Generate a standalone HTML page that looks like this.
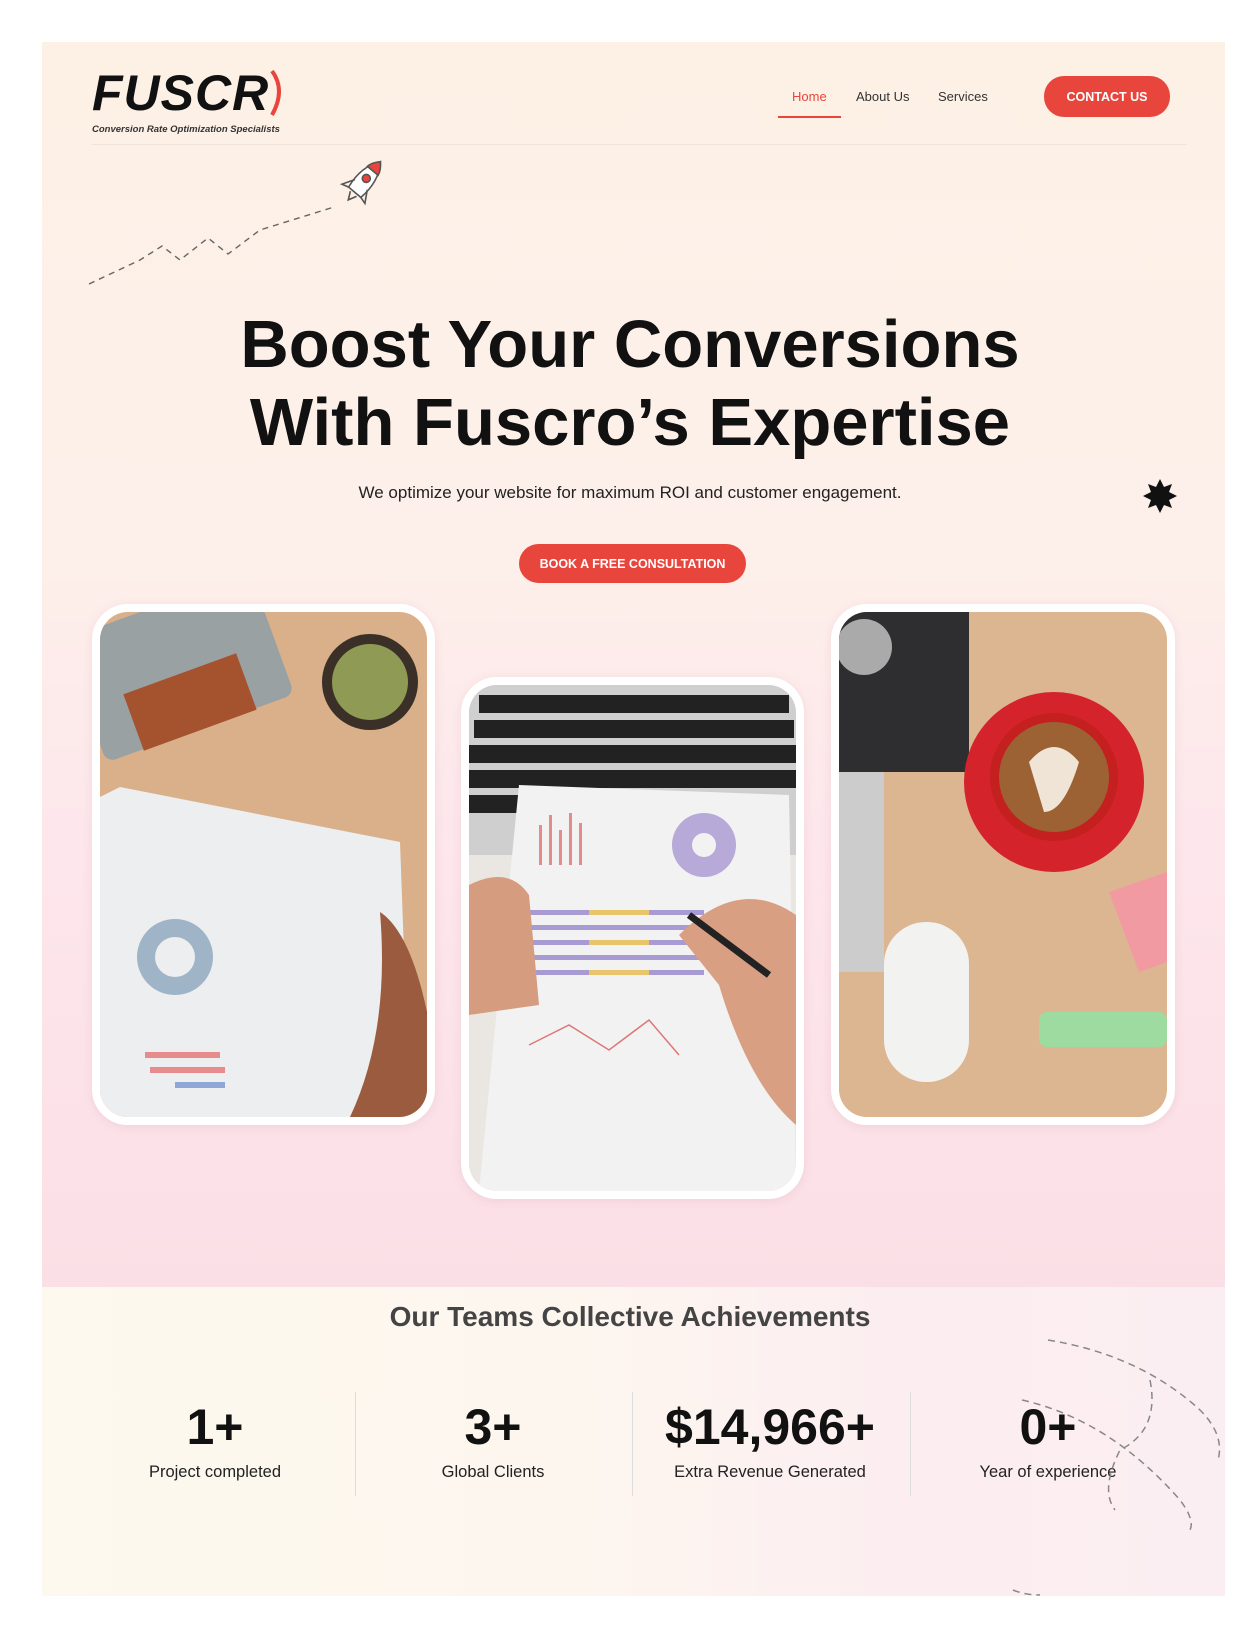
<!DOCTYPE html>
<html><head><meta charset="utf-8"><style>
*{margin:0;padding:0;box-sizing:border-box}
body{width:1260px;height:1631px;background:#fff;font-family:"Liberation Sans",sans-serif;position:relative;overflow:hidden}
.abs{position:absolute}
#hero{left:42px;top:42px;width:1183px;height:1245px;background:linear-gradient(180deg,#fdf1e6 0%,#fdf0ea 40%,#fde6ec 65%,#fbdfe6 100%)}
#ach{left:42px;top:1287px;width:1183px;height:309px;background:linear-gradient(90deg,#fdf9ee 0%,#fdf6ef 45%,#fcedf0 75%,#fbeef2 100%)}
.nav{font-size:13px;color:#333;top:89px}
.btn{background:#e8463c;color:#fff;font-weight:bold;font-size:12.5px;border-radius:20px;display:flex;align-items:center;justify-content:center}
h1{position:absolute;left:0;width:1260px;text-align:center;font-size:67px;font-weight:bold;color:#111;line-height:78px;top:306px}
.card{border:8px solid #fff;border-radius:36px;overflow:hidden;box-shadow:0 2px 10px rgba(200,150,160,.2)}
.num{font-size:50px;font-weight:bold;color:#111;text-align:center;width:270px;top:1398px}
.lbl{font-size:16.5px;color:#222;text-align:center;width:270px;top:1463px}
.div{width:1px;height:104px;background:#ddd;top:1392px}
</style></head><body>
<div id="hero" class="abs"></div>
<div id="ach" class="abs"></div>
<div class="abs" style="left:92px;top:64px;font-size:50px;font-weight:bold;font-style:italic;color:#111;letter-spacing:1px">FUSCR</div>
<svg class="abs" style="left:264px;top:68px" width="24" height="50"><path d="M8 3 Q22 22 8 47" stroke="#e8463c" stroke-width="4" fill="none"/><path d="M12 8 Q18 25 12 40" stroke="#e8463c" stroke-width="1.5" fill="none"/></svg>
<div class="abs" style="left:92px;top:124px;font-size:9.5px;font-style:italic;font-weight:bold;color:#333">Conversion Rate Optimization Specialists</div>
<div class="abs nav" style="left:792px;color:#e8463c">Home</div>
<div class="abs" style="left:778px;top:116px;width:63px;height:2px;background:#e8463c"></div>
<div class="abs nav" style="left:856px">About Us</div>
<div class="abs nav" style="left:938px">Services</div>
<div class="abs btn" style="left:1044px;top:76px;width:126px;height:41px">CONTACT US</div>
<div class="abs" style="left:92px;top:144px;width:1095px;height:1px;background:#efe3da"></div>
<svg class="abs" style="left:80px;top:150px" width="330" height="140">
<path d="M9 134 L60 110 L82 96 L100 110 L128 88 L148 104 L180 80 L254 57" stroke="#666" stroke-width="1.4" stroke-dasharray="6 5" fill="none"/>
<g transform="translate(285,30) rotate(40)" stroke="#555" stroke-width="1.6" fill="none">
<path d="M0 -24 Q12 -8 8 16 L-8 16 Q-12 -8 0 -24Z" fill="#fff"/>
<path d="M0 -24 Q6 -18 7 -12 L-7 -12 Q-6 -18 0 -24Z" fill="#e8463c"/>
<circle cx="0" cy="-2" r="4" fill="#e8463c"/>
<path d="M-8 6 L-15 18 L-8 16 M8 6 L15 18 L8 16 M-4 18 L0 26 L4 18"/>
</g></svg>
<h1>Boost Your Conversions<br>With Fuscro’s Expertise</h1>
<div class="abs" style="left:0;width:1260px;text-align:center;top:483px;font-size:17px;color:#222">We optimize your website for maximum ROI and customer engagement.</div>
<svg class="abs" style="left:1142px;top:478px" width="36" height="36" viewBox="-18 -18 36 36"><polygon fill="#111" points="0,-17 4,-9 12,-12 9,-4 17,0 9,4 12,12 4,9 0,17 -4,9 -12,12 -9,4 -17,0 -9,-4 -12,-12 -4,-9"/></svg>
<div class="abs btn" style="left:519px;top:544px;width:227px;height:39px">BOOK A FREE CONSULTATION</div>
<div class="abs card" style="left:92px;top:604px;width:343px;height:521px">
<svg width="327" height="505"><rect width="327" height="505" fill="#d9b08a"/>
<rect x="-20" y="-10" width="200" height="130" rx="10" fill="#9aa1a3" transform="rotate(-20 80 60)"/>
<rect x="30" y="60" width="120" height="60" fill="#a5522f" transform="rotate(-20 90 90)"/>
<circle cx="270" cy="70" r="48" fill="#3a3028"/><circle cx="270" cy="70" r="38" fill="#8f9a55"/>
<polygon points="20,175 300,230 310,505 0,505 0,185" fill="#eceef0"/>
<circle cx="75" cy="345" r="38" fill="#9fb4c6"/><circle cx="75" cy="345" r="20" fill="#eceef0"/>
<rect x="45" y="440" width="75" height="6" fill="#e68c8c"/><rect x="50" y="455" width="75" height="6" fill="#e68c8c"/><rect x="75" y="470" width="50" height="6" fill="#8fa7d6"/>
<path d="M280 300 Q310 320 327 400 L327 505 L250 505 Q290 420 280 300Z" fill="#9b5b3e"/></svg></div>
<div class="abs card" style="left:461px;top:677px;width:343px;height:522px">
<svg width="327" height="506"><rect width="327" height="506" fill="#eae7e3"/>
<rect width="327" height="170" fill="#cfcfd0"/>
<g fill="#222"><rect x="10" y="10" width="310" height="18"/><rect x="5" y="35" width="320" height="18"/><rect x="0" y="60" width="327" height="18"/><rect x="0" y="85" width="327" height="18"/><rect x="0" y="110" width="60" height="18"/></g>
<polygon points="50,100 320,110 327,506 10,506" fill="#f2f2f2"/>
<g fill="#e48c8c"><rect x="70" y="140" width="3" height="40"/><rect x="80" y="130" width="3" height="50"/><rect x="90" y="145" width="3" height="35"/><rect x="100" y="128" width="3" height="52"/><rect x="110" y="138" width="3" height="42"/></g>
<circle cx="235" cy="160" r="32" fill="#b7a9d8"/><circle cx="235" cy="160" r="12" fill="#f2f2f2"/>
<g fill="#a89bd3"><rect x="55" y="225" width="180" height="5"/><rect x="55" y="240" width="180" height="5"/><rect x="55" y="255" width="180" height="5"/><rect x="55" y="270" width="180" height="5"/><rect x="55" y="285" width="180" height="5"/></g>
<g fill="#e8c56b"><rect x="120" y="225" width="60" height="5"/><rect x="120" y="255" width="60" height="5"/><rect x="120" y="285" width="60" height="5"/></g>
<path d="M60 360 L100 340 L140 365 L180 335 L210 370" stroke="#d77" fill="none" stroke-width="1.5"/>
<path d="M0 200 Q40 180 60 210 L70 320 L0 330Z" fill="#d69c80"/>
<path d="M210 250 Q270 190 327 230 L327 440 Q280 400 250 300Z" fill="#d99f83"/>
<path d="M220 230 L300 290" stroke="#222" stroke-width="7"/></svg></div>
<div class="abs card" style="left:831px;top:604px;width:344px;height:521px">
<svg width="328" height="505"><rect width="328" height="505" fill="#dcb591"/>
<rect x="0" y="0" width="130" height="160" fill="#2e2e30"/>
<circle cx="25" cy="35" r="28" fill="#aaa"/>
<rect x="0" y="160" width="45" height="200" fill="#ccc"/>
<circle cx="215" cy="170" r="90" fill="#d4232a"/>
<circle cx="215" cy="165" r="64" fill="#c3201f"/><circle cx="215" cy="165" r="55" fill="#9c6233"/>
<path d="M190 150 Q215 120 240 150 Q225 200 205 200Z" fill="#f0e4d6"/>
<rect x="45" y="310" width="85" height="160" rx="42" fill="#f2f2f0"/>
<rect x="200" y="400" width="128" height="35" rx="8" fill="#9ddba0"/>
<polygon points="270,280 328,260 328,350 300,360" fill="#f29aa2"/></svg></div>
<div class="abs" style="left:0;width:1260px;text-align:center;top:1301px;font-size:28px;font-weight:bold;color:#444">Our Teams Collective Achievements</div>
<div class="abs num" style="left:80px">1+</div>
<div class="abs num" style="left:358px">3+</div>
<div class="abs num" style="left:635px">$14,966+</div>
<div class="abs num" style="left:913px">0+</div>
<div class="abs lbl" style="left:80px">Project completed</div>
<div class="abs lbl" style="left:358px">Global Clients</div>
<div class="abs lbl" style="left:635px">Extra Revenue Generated</div>
<div class="abs lbl" style="left:913px">Year of experience</div>
<div class="abs div" style="left:355px"></div>
<div class="abs div" style="left:632px"></div>
<div class="abs div" style="left:910px"></div>
<svg class="abs" style="left:1000px;top:1320px" width="225" height="280" fill="none" stroke="#888" stroke-width="1.5" stroke-dasharray="7 5">
<path d="M48 20 Q140 35 200 90 Q225 115 218 140"/>
<path d="M150 60 Q160 110 120 130 Q100 170 115 190"/>
<path d="M22 80 Q110 100 180 180 Q195 200 190 210"/>
<path d="M13 270 Q25 275 40 275"/>
</svg>
</body></html>
